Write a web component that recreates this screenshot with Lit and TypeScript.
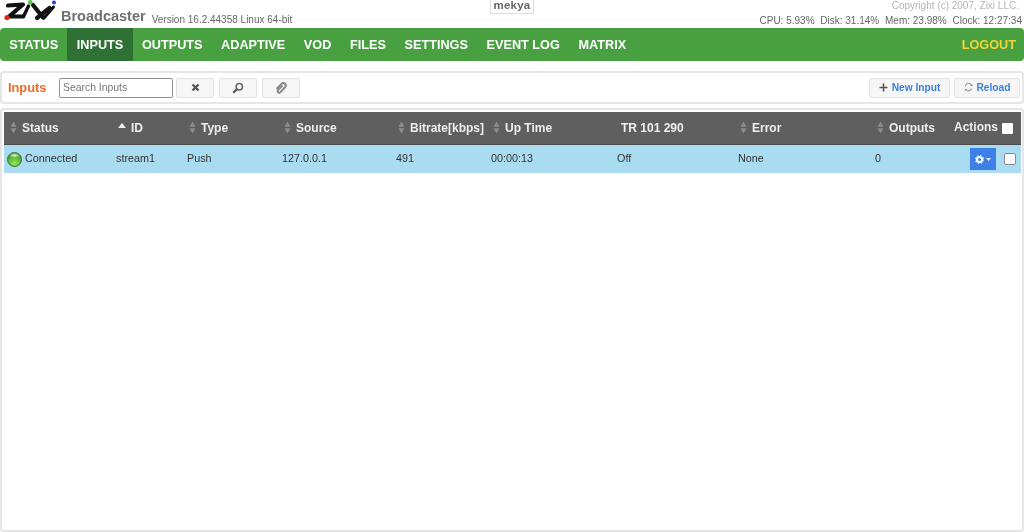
import { LitElement, html, css, svg } from "lit";
import { customElement } from "lit/decorators.js";

const sortIcon = html`<svg class="sort" width="7" height="13" viewBox="0 0 7 13"><path d="M3.5 0.5 L6.5 5.8 H0.5Z M3.5 12.5 L6.5 7.2 H0.5Z" fill="#8e8e8e"/></svg>`;
const sortUp = html`<svg class="sortup" width="8" height="5" viewBox="0 0 8 5"><path d="M4 0 L8 5 H0Z" fill="#f4f4f4"/></svg>`;

const cols: { label: string; icon?: "sort" | "up"; cell: unknown }[] = [
  { label: "Status", icon: "sort", cell: "" },
  { label: "ID", icon: "up", cell: "stream1" },
  { label: "Type", icon: "sort", cell: "Push" },
  { label: "Source", icon: "sort", cell: "127.0.0.1" },
  { label: "Bitrate[kbps]", icon: "sort", cell: "491" },
  { label: "Up Time", icon: "sort", cell: "00:00:13" },
  { label: "TR 101 290", cell: "Off" },
  { label: "Error", icon: "sort", cell: "None" },
  { label: "Outputs", icon: "sort", cell: "0" },
];

@customElement("app-root")
export class AppRoot extends LitElement {
  static styles = css`
    :host { display: flex; flex-direction: column; width: 1024px; height: 532px; overflow: hidden; background: #fff; font-family: "Liberation Sans", Arial, sans-serif; color: #333; filter: blur(0.45px); }
    .top { height: 28px; display: grid; grid-template-columns: 1fr auto 1fr; flex: none; }
    .brand { display: flex; align-items: flex-start; }
    .logo { flex: none; }
    .bname { font-size: 14.5px; font-weight: 700; color: #6f6f6f; margin: 8px 0 0 3px; line-height: 17px; white-space: nowrap; }
    .ver { font-size: 10px; color: #666; margin: 13px 0 0 6px; line-height: 14px; white-space: nowrap; }
    .host { font-size: 11.5px; font-weight: 700; color: #666; border: 1px solid #ddd; border-top: none; height: 13px; line-height: 11px; padding: 0 3px; letter-spacing: 0.2px; }
    .sys { text-align: right; padding-right: 2px; font-size: 10px; line-height: 14px; white-space: nowrap; margin-top: -1px; }
    .copy { color: #b4b4b4; padding-right: 3px; }
    .stats { color: #666; margin-top: 1px; }
    .stats span { margin-left: 3px; }
    nav { flex: none; height: 33px; background: #48a040; border-radius: 4px; display: flex; align-items: stretch; color: #fff; font-size: 12.7px; font-weight: 700; overflow: hidden; }
    nav a { display: flex; align-items: center; padding: 0 9.3px; }
    nav a.active { background: #2f7035; }
    nav a.logout { margin-left: auto; color: #f3d33c; padding-right: 8px; }
    .panel { border: 2px solid #e6e6e6; border-radius: 4px; background: #fff; }
    .tools { flex: none; height: 29px; margin-top: 10px; display: flex; align-items: center; padding: 0 2px 0 6px; }
    .title { color: #ee6a26; font-size: 12.8px; font-weight: 700; width: 51px; }
    input.search { box-sizing: border-box; width: 114px; height: 20px; margin: 0; padding: 0 3px; border: 1px solid #8f8f8f; border-radius: 2px; font: 10.4px "Liberation Sans", Arial, sans-serif; color: #777; background: #fff; }
    input.search::placeholder { color: #777; opacity: 1; }
    .btn { box-sizing: border-box; display: flex; align-items: center; justify-content: center; height: 20px; background: #f6f6f6; border: 1px solid #e2e2e2; border-radius: 2px; font-size: 10.2px; font-weight: 700; color: #3b7fe0; }
    .ico { width: 38px; margin-left: 5px; }
    input + .ico { margin-left: 3px; }
    .spacer { flex: 1; }
    .new { width: 81px; gap: 4px; }
    .reload { width: 66px; gap: 4px; margin-left: 4px; }
    .main { flex: 1; margin-top: 4px; padding: 2px 1px 0 2px; }
    .grid { display: grid; grid-template-columns: 108px 71px 95px 114px 95px 126px 121px 137px 79px 71px; }
    .hd { box-sizing: border-box; height: 33px; background: #5f5f5f; border-bottom: 1px solid #4b4b4b; color: #eee; font-size: 12px; font-weight: 700; }
    .hd > div { display: flex; align-items: center; gap: 5px; padding-left: 6px; white-space: nowrap; padding-bottom: 1px; }
    .sort { flex: none; }
    .sortup { flex: none; margin-bottom: 5px; }
    .hd .plain { padding-left: 8px; }
    .hd .act { padding-left: 4px; gap: 4px; padding-bottom: 2px; }
    .cb { box-sizing: border-box; width: 11px; height: 11px; background: #fff; border-radius: 1px; flex: none; margin-top: 2px; }
    .row { height: 28px; background: #a9dcf0; font-size: 10.8px; color: #333; }
    .row > div { display: flex; align-items: center; padding-left: 4px; white-space: nowrap; padding-bottom: 2px; }
    .row .first { padding-left: 3px; gap: 3px; }
    .led { width: 15px; height: 15px; border-radius: 50%; flex: none; margin-top: 2px; box-sizing: border-box; border: 1px solid #3b6f34; background: radial-gradient(ellipse 45% 20% at 50% 18%, #e6f5da 0%, rgba(230,245,218,0) 100%), radial-gradient(circle at 50% 80%, #95e85c 0%, #55b531 55%, #2f8420 100%); }
    .row .actc { padding-left: 20px; gap: 8px; padding-bottom: 0; }
    .gear { width: 26px; height: 22px; background: #3f7fe8; display: flex; align-items: center; justify-content: center; gap: 2px; flex: none; }
    .rcb { box-sizing: border-box; width: 12px; height: 12px; background: #fff; border: 1px solid #8a8a8a; border-radius: 2px; flex: none; }
  `;

  render() {
    return html`
      <div class="top">
        <div class="brand">
          <svg class="logo" width="58" height="24" viewBox="0 0 58 24" fill="none">
            <g stroke="#111" stroke-linecap="round" stroke-linejoin="round" stroke-width="4.2">
              <path d="M8 5.5 L23 4.5 L9 16.5 H23"/>
              <path d="M28.5 6 L23.5 16.5" stroke-width="3.4"/>
              <path d="M33 5 L43 17.5"/>
              <path d="M49.5 8 L37 18"/>
              <path d="M53.5 7 L44 18" stroke-width="3"/>
            </g>
            <circle cx="7" cy="17.5" r="2.6" fill="#e3261c"/>
            <circle cx="30.3" cy="2.4" r="2.4" fill="#58c04f"/>
            <circle cx="54" cy="2.6" r="2" fill="#1f45e0"/>
          </svg>
          <span class="bname">Broadcaster</span>
          <span class="ver">Version 16.2.44358 Linux 64-bit</span>
        </div>
        <div><div class="host">mekya</div></div>
        <div class="sys">
          <div class="copy">Copyright (c) 2007, Zixi LLC.</div>
          <div class="stats"><span>CPU: 5.93%</span> <span>Disk: 31.14%</span> <span>Mem: 23.98%</span> <span>Clock: 12:27:34</span></div>
        </div>
      </div>
      <nav>
        <a>STATUS</a><a class="active">INPUTS</a><a>OUTPUTS</a><a>ADAPTIVE</a><a>VOD</a><a>FILES</a><a>SETTINGS</a><a>EVENT LOG</a><a>MATRIX</a>
        <a class="logout">LOGOUT</a>
      </nav>
      <div class="panel tools">
        <span class="title">Inputs</span>
        <input class="search" placeholder="Search Inputs" />
        <span class="btn ico"><svg width="9" height="9" viewBox="0 0 9 9"><path d="M1.5 1.5 L7.5 7.5 M7.5 1.5 L1.5 7.5" stroke="#555" stroke-width="2.4"/></svg></span>
        <span class="btn ico"><svg width="12" height="12" viewBox="0 0 12 12" fill="none"><circle cx="7.3" cy="4.7" r="3.2" stroke="#666" stroke-width="1.5"/><path d="M5 7 L1.3 10.7" stroke="#555" stroke-width="2.2"/></svg></span>
        <span class="btn ico"><svg width="12" height="12" viewBox="0 0 12 12" fill="none"><path d="M1.5 7 L6.5 2 A2.2 2.2 0 0 1 10.2 5 L5.5 10.2 A1.6 1.6 0 0 1 3 8 L7.5 3.6" stroke="#8a8a8a" stroke-width="2"/></svg></span>
        <span class="spacer"></span>
        <span class="btn new"><svg width="9" height="9" viewBox="0 0 9 9"><path d="M4.5 0.5 V8.5 M0.5 4.5 H8.5" stroke="#555" stroke-width="1.6"/></svg>New Input</span>
        <span class="btn reload"><svg width="9" height="9" viewBox="0 0 9 9" fill="none"><path d="M1.5 3.5 A3 3 0 0 1 7.5 3 M7.5 5.5 A3 3 0 0 1 2 6.5" stroke="#888" stroke-width="1"/><path d="M6 3 H8.5 V1Z M1 6 H3.5 L1 8Z" fill="#888"/></svg>Reload</span>
      </div>
      <div class="panel main">
        <div class="grid hd">
          ${cols.map((c) => html`<div class="${c.icon ? "" : "plain"}">${c.icon === "sort" ? sortIcon : c.icon === "up" ? sortUp : ""}${c.label}</div>`)}
          <div class="act">Actions<span class="cb"></span></div>
        </div>
        <div class="grid row">
          <div class="first"><span class="led"></span>Connected</div>
          ${cols.slice(1).map((c) => html`<div>${c.cell}</div>`)}
          <div class="actc">
            <span class="gear">
              <svg width="9" height="9" viewBox="0 0 9 9">${svg`<circle cx="4.5" cy="4.5" r="2.6" fill="none" stroke="#fff" stroke-width="2"/><circle cx="4.5" cy="4.5" r="4.2" fill="none" stroke="#fff" stroke-width="1" stroke-dasharray="1.6 1.7"/>`}</svg>
              <svg width="5" height="3" viewBox="0 0 5 3"><path d="M0 0 H5 L2.5 3Z" fill="#dfe9fb"/></svg>
            </span>
            <span class="rcb"></span>
          </div>
        </div>
      </div>
    `;
  }
}
